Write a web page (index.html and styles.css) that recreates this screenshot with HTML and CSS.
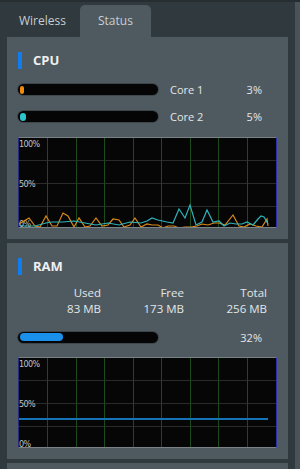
FILE: index.html
```html
<!DOCTYPE html>
<html lang="en">

<head>
    <meta charset="UTF-8">
    <meta name="viewport" content="width=device-width, initial-scale=1.0">
    <title>Status</title>
    <link rel="stylesheet" href="styles.css">
</head>

<body>
    <div class="page">
        <ul class="tabs">
            <li class="tab">Wireless</li>
            <li class="tab active">Status</li>
        </ul>

        <!-- CPU -->
        <div class="panel">
            <h3 class="title">CPU</h3>
            <div class="rows">
                <div class="row">
                    <div class="bar"><div class="fill orange" style="width: 3%;"></div></div>
                    <span class="label">Core 1</span>
                    <span class="value">3%</span>
                </div>
                <div class="row">
                    <div class="bar"><div class="fill cyan" style="width: 5%;"></div></div>
                    <span class="label">Core 2</span>
                    <span class="value">5%</span>
                </div>
            </div>
            <svg class="chart" viewBox="0 0 257 89" preserveAspectRatio="none">
                <g class="hgrid">
                    <line x1="0" y1="22.5" x2="257" y2="22.5" />
                    <line x1="0" y1="45.5" x2="257" y2="45.5" />
                    <line x1="0" y1="68.5" x2="257" y2="68.5" />
                </g>
                <g class="vgrid">
                    <line x1="28.5" y1="0" x2="28.5" y2="89" />
                    <line x1="57.5" y1="0" x2="57.5" y2="89" />
                    <line x1="85.5" y1="0" x2="85.5" y2="89" />
                    <line x1="114.5" y1="0" x2="114.5" y2="89" />
                    <line x1="142.5" y1="0" x2="142.5" y2="89" />
                    <line x1="171.5" y1="0" x2="171.5" y2="89" />
                    <line x1="199.5" y1="0" x2="199.5" y2="89" />
                    <line x1="228.5" y1="0" x2="228.5" y2="89" />
                </g>
                <text x="0" y="9">100%</text>
                <text x="0" y="49">50%</text>
                <text x="0" y="89">0%</text>
                <polyline class="line-orange" points="0,86 10,80 16,88 21,89 27,78 33,88 38,88 44,75 49,78 55,89 60,80 66,89 71,88 77,80 83,88 89,87 94,81 100,82 105,89 111,87 116,80 122,89 128,86 133,87 139,87 144,90 149,88 155,88 160,90 166,89 172,89 178,88 183,86 189,87 195,85 200,85 206,87 214,77 220,88 225,89 231,86 237,88 243,89 248,81 249,88" />
                <polyline class="line-cyan" points="0,87 5,88 16,88 27,85 33,84 44,84 55,83 66,85 77,87 89,85 100,87 111,84 122,85 128,83 133,80 139,82 148,84 154,85 160,71 166,80 171,67 177,87 183,84 188,72 194,84 200,83 205,88 211,85 217,86 223,86 228,84 234,87 239,81 242,78 245,79 249,86" />
            </svg>
        </div>

        <!-- RAM -->
        <div class="panel">
            <h3 class="title">RAM</h3>
            <div class="stats">
                <span>Used</span><span>Free</span><span>Total</span>
                <span>83 MB</span><span>173 MB</span><span>256 MB</span>
            </div>
            <div class="row ram-row">
                <div class="bar"><div class="fill blue" style="width: 32%;"></div></div>
                <span class="label"></span>
                <span class="value">32%</span>
            </div>
            <svg class="chart" viewBox="0 0 257 89" preserveAspectRatio="none">
                <g class="hgrid">
                    <line x1="0" y1="22.5" x2="257" y2="22.5" />
                    <line x1="0" y1="45.5" x2="257" y2="45.5" />
                    <line x1="0" y1="68.5" x2="257" y2="68.5" />
                </g>
                <g class="vgrid">
                    <line x1="28.5" y1="0" x2="28.5" y2="89" />
                    <line x1="57.5" y1="0" x2="57.5" y2="89" />
                    <line x1="85.5" y1="0" x2="85.5" y2="89" />
                    <line x1="114.5" y1="0" x2="114.5" y2="89" />
                    <line x1="142.5" y1="0" x2="142.5" y2="89" />
                    <line x1="171.5" y1="0" x2="171.5" y2="89" />
                    <line x1="199.5" y1="0" x2="199.5" y2="89" />
                    <line x1="228.5" y1="0" x2="228.5" y2="89" />
                </g>
                <text x="0" y="9">100%</text>
                <text x="0" y="49">50%</text>
                <text x="0" y="89">0%</text>
                <line class="line-blue" x1="0" y1="61" x2="249" y2="61" />
            </svg>
        </div>

        <div class="panel"></div>
    </div>
    <div class="scrollbar"></div>
</body>

</html>
```

FILE: styles.css
```css
* {
    margin: 0;
    padding: 0;
    box-sizing: border-box;
}

li {
    list-style: none;
}

html,
body {
    height: 100%;
    overflow: hidden;
}

body {
    display: flex;
    background-color: #2f393e;
    border-top: 2px solid #262e32;
    font-family: "Open Sans", "Noto Sans", sans-serif;
    color: #e3e6e7;
}

.page {
    flex: 1;
    padding: 0 7px;
}

.scrollbar {
    width: 5px;
    background-color: #4a5358;
}

.tabs {
    display: flex;
    margin-top: 3px;
    height: 32px;
}

.tab {
    padding: 0 12px;
    margin-right: 2px;
    font-size: 12px;
    line-height: 32px;
    color: #c9ced1;
    border-radius: 5px 5px 0 0;
}

.tab.active {
    padding: 0 18px;
    background-color: #4f5a60;
}

.panel {
    background-color: #4f5a60;
    padding: 15px 11px 11px;
    margin-bottom: 4px;
}

.title {
    height: 17px;
    border-left: 4px solid #0f7cf0;
    padding-left: 11px;
    font-size: 13px;
    line-height: 17px;
    font-weight: bold;
    color: #eef0f1;
}

.rows {
    margin-top: 7px;
}

.row {
    display: grid;
    grid-template-columns: 140px 1fr auto;
    align-items: center;
    height: 27px;
    padding-right: 15px;
    font-size: 11px;
}

.label {
    padding-left: 12px;
}

.bar {
    height: 11px;
    padding: 1.5px;
    background-color: #050505;
    border-radius: 6px;
    box-shadow: 0 0 0 1px #3d464b;
}

.fill {
    height: 8px;
    border-radius: 4px;
}

.orange {
    background-color: #f08c0a;
}

.cyan {
    background-color: #2ec4cc;
}

.blue {
    background-color: #1a90ea;
}

.chart {
    display: block;
    width: 259px;
    height: 91px;
    margin-top: 7px;
    background-color: #060606;
    border-top: 1px solid #7a8185;
    border-bottom: 1px solid #7a8185;
    border-left: 1px solid #27297a;
    border-right: 1px solid #2c30a8;
}

.hgrid line {
    stroke: #2b2b2b;
    stroke-width: 1;
}

.vgrid line {
    stroke: #1c4a1c;
    stroke-width: 1;
}

.chart text {
    font-family: "DejaVu Sans", sans-serif;
    font-size: 8px;
    fill: #c4c4c4;
    letter-spacing: -0.6px;
}

.line-orange {
    fill: none;
    stroke: #d98a1a;
    stroke-width: 1.2;
}

.line-cyan {
    fill: none;
    stroke: #2fb3bb;
    stroke-width: 1.2;
}

.line-blue {
    stroke: #1573b8;
    stroke-width: 2;
}

.stats {
    display: grid;
    grid-template-columns: 83px 83px 83px;
    margin-top: 10px;
    font-size: 11.5px;
    line-height: 16px;
    text-align: right;
}

.ram-row {
    height: 28px;
    margin-top: 6px;
}

.ram-row+.chart {
    margin-top: 6px;
}
```
